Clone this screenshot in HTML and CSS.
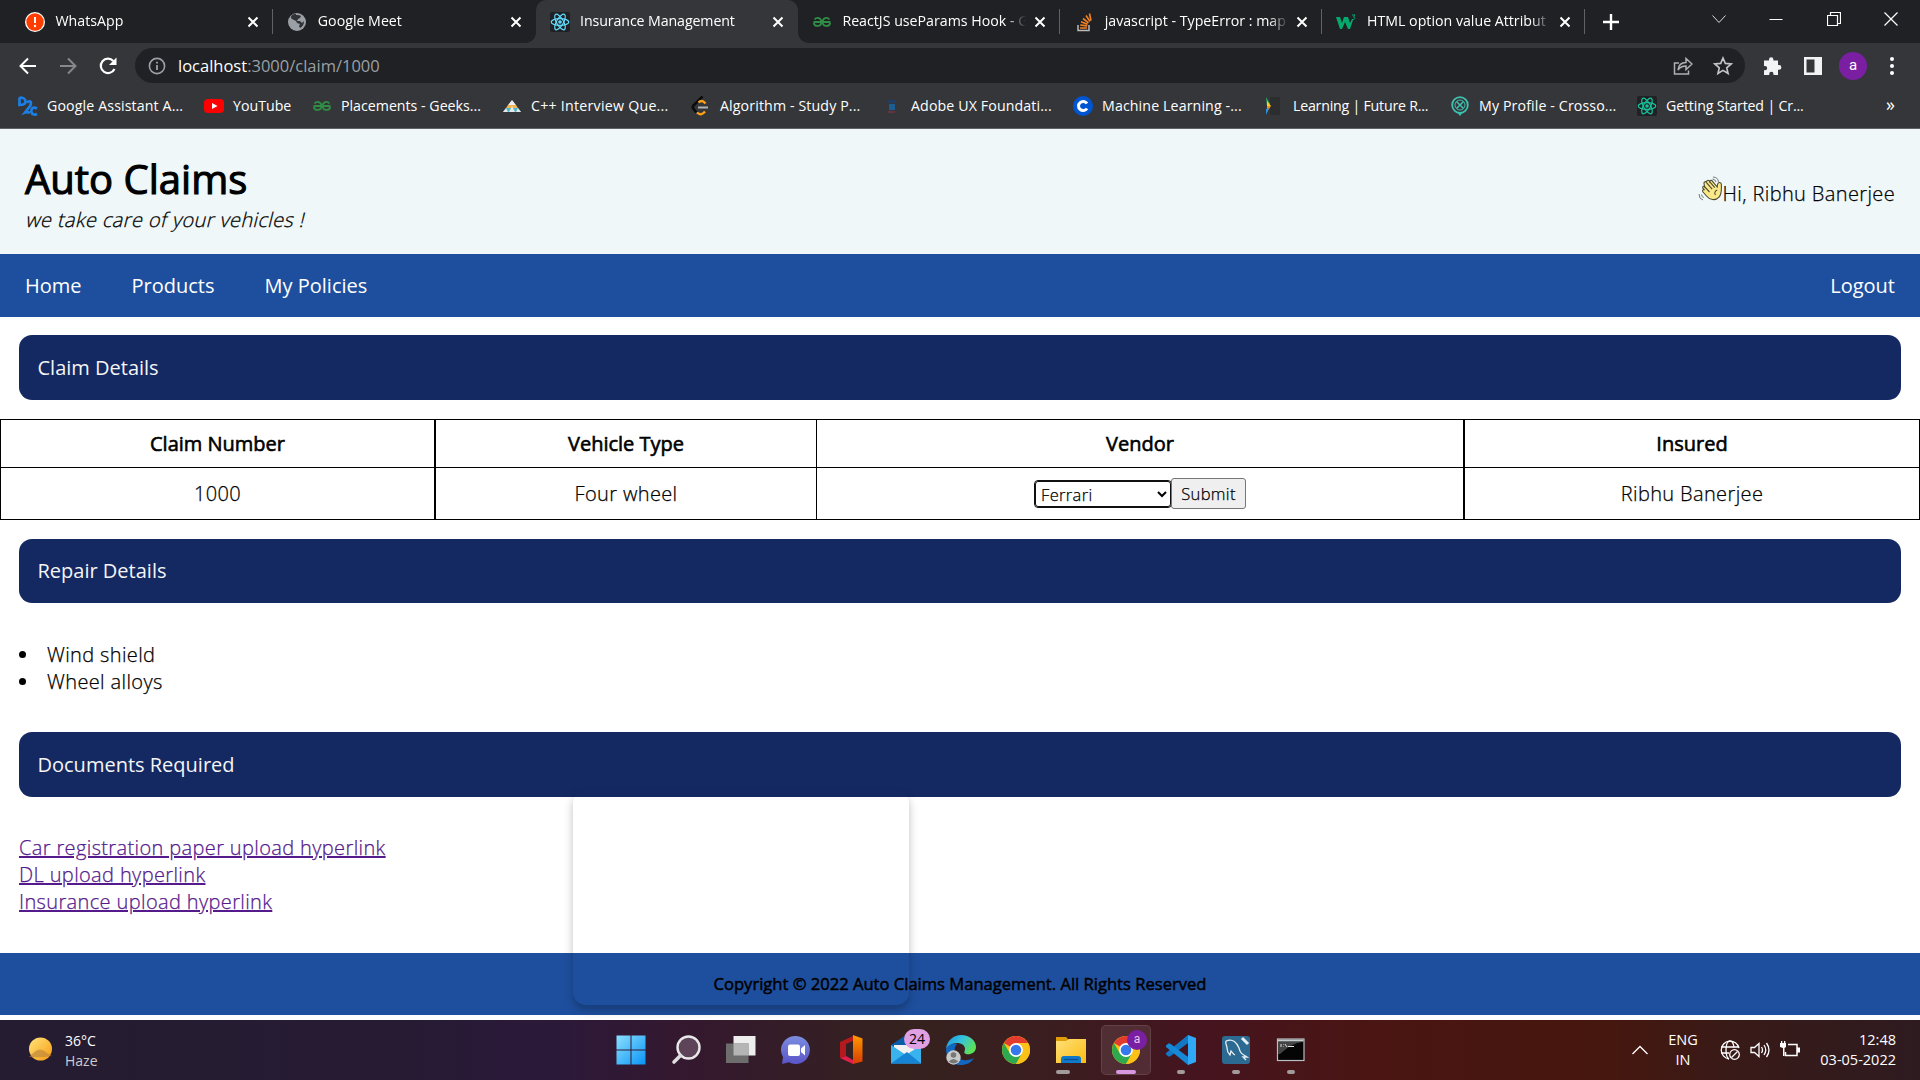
FILE: index.html
```html
<!DOCTYPE html>
<html lang="en">
<head>
<meta charset="utf-8">
<title>Insurance Management</title>
<link rel="stylesheet" href="styles.css">
</head>
<body>
<svg class="defs" width="0" height="0">
  <defs>
    <linearGradient id="win" x1="0" y1="0" x2="1" y2="1"><stop offset="0" stop-color="#8be0ff"/><stop offset="1" stop-color="#0a93f5"/></linearGradient>
    <linearGradient id="chat" x1="0" y1="0" x2="0" y2="1"><stop offset="0" stop-color="#7b8de0"/><stop offset="1" stop-color="#5a54c8"/></linearGradient>
    <linearGradient id="office" x1="0" y1="0" x2="0" y2="1"><stop offset="0" stop-color="#ff9a00"/><stop offset="1" stop-color="#d83b01"/></linearGradient>
    <linearGradient id="folder" x1="0" y1="0" x2="1" y2="1"><stop offset="0" stop-color="#ffe07a"/><stop offset="1" stop-color="#fbbc10"/></linearGradient>
    <linearGradient id="edge" x1="0" y1="0" x2="1" y2=".5"><stop offset="0" stop-color="#1b8fdc"/><stop offset=".5" stop-color="#35c1e0"/><stop offset="1" stop-color="#5be05a"/></linearGradient>
    <linearGradient id="sun" x1="0" y1="0" x2="1" y2="1"><stop offset="0" stop-color="#ffe57a"/><stop offset="1" stop-color="#f79a12"/></linearGradient>
    <symbol id="x" viewBox="0 0 12 12"><path d="M1.5 1.5l9 9M10.5 1.5l-9 9" stroke="#fff" stroke-width="2" fill="none"/></symbol>
    <symbol id="react" viewBox="0 0 20 20"><g fill="none" stroke="currentColor" stroke-width="1.2"><ellipse cx="10" cy="10" rx="8.8" ry="3.4"/><ellipse cx="10" cy="10" rx="8.8" ry="3.4" transform="rotate(60 10 10)"/><ellipse cx="10" cy="10" rx="8.8" ry="3.4" transform="rotate(120 10 10)"/></g><circle cx="10" cy="10" r="1.8" fill="currentColor"/></symbol>
    <symbol id="gfg" viewBox="0 0 20 20"><path d="M2.500 7.500C5 4.500 9.300 6 9.300 10H1.500M9.300 10c0 5-6.800 5.200-7.500.8M17.500 7.500C15 4.500 10.700 6 10.700 10h7.800M10.700 10c0 5 6.800 5.200 7.500.8" fill="none" stroke="#2f8d46" stroke-width="1.800"/></symbol>
    <symbol id="chrome" viewBox="0 0 28 28"><circle cx="14" cy="14" r="14" fill="#fbc116"/><path d="M14 14L1.900 7A14 14 0 0 1 26.100 7z" fill="#e33b2e"/><path d="M1.900 7A14 14 0 0 0 14 28l6-10.500L14 14 7.900 17.500z" fill="#2da94f"/><path d="M14 7h12.100A14 14 0 0 1 14 28l6-10.500z" fill="#fbc116"/><circle cx="14" cy="14" r="6.900" fill="#fff"/><circle cx="14" cy="14" r="5.300" fill="#3478ec"/></symbol>
  </defs>
</svg>

<header class="tabs">
  <div class="tab">
    <svg class="fav" viewBox="0 0 20 20"><circle cx="10" cy="10" r="10" fill="#fff"/><circle cx="10" cy="10" r="8.700" fill="#ff3d00"/><path d="M10 5v6" stroke="#fff" stroke-width="2"/><circle cx="10" cy="14" r="1.200" fill="#fff"/></svg>
    <span class="tab-title">WhatsApp</span><svg class="close"><use href="#x"/></svg>
  </div>
  <div class="tab flush">
    <svg class="fav" viewBox="0 0 20 20"><circle cx="10" cy="10" r="9" fill="#9aa0a6"/><path d="M9 3c2 0 4 0 5 1l-1 2-2 1-1 2h3l2 2 2-2c0 4-2 6-4 7l-1-2 1-2-3-1-1-2-4-2-1-1c0-3 2-4 5-4z" fill="#303235"/></svg>
    <span class="tab-title">Google Meet</span><svg class="close"><use href="#x"/></svg>
  </div>
  <div class="tab active flush">
    <svg class="fav dark cyan"><use href="#react"/></svg>
    <span class="tab-title">Insurance Management</span><svg class="close"><use href="#x"/></svg>
  </div>
  <div class="tab">
    <svg class="fav"><use href="#gfg"/></svg>
    <span class="tab-title">ReactJS useParams Hook - G</span><svg class="close"><use href="#x"/></svg>
  </div>
  <div class="tab">
    <svg class="fav" viewBox="0 0 20 20"><path d="M4 13v5.500h11V13" fill="none" stroke="#bcbbbb" stroke-width="1.500"/><path d="M6 16h7M6.200 13l7 .9M7 9.800l6.600 2.400M9 6.500l5.500 4.300M12 3.500l4 6M15.500 1.500l1.500 7" stroke="#f48024" stroke-width="1.600"/></svg>
    <span class="tab-title">javascript - TypeError : map</span><svg class="close"><use href="#x"/></svg>
  </div>
  <div class="tab">
    <svg class="fav" viewBox="0 0 20 20"><path d="M0 5h4l2 6 2-6h4l2 6 2-4 1 1-3 9h-2l-3-7-3 7H4z" fill="#04aa6d"/><path d="M16 3h3l-1.500 2c2 0 2 3-1.500 2.500" fill="none" stroke="#04aa6d"/></svg>
    <span class="tab-title">HTML option value Attribut</span><svg class="close"><use href="#x"/></svg>
  </div>
  <svg class="plus" viewBox="0 0 16 16"><path d="M8 0v16M0 8h16" stroke="#fff" stroke-width="2.400"/></svg>
  <div class="window-controls">
    <svg viewBox="0 0 14 14"><path d="M.5 3.500L7 10.500l6.500-7" fill="none" stroke="#ddd"/></svg>
    <svg viewBox="0 0 14 14"><path d="M.5 7.500h13" stroke="#fff"/></svg>
    <svg viewBox="0 0 14 14"><path d="M.5 3.500h10v10H.5zM3.500 3V.5h10v11H11" fill="none" stroke="#fff" stroke-width="1.200"/></svg>
    <svg viewBox="0 0 14 14"><path d="M.5.5l13 13M13.500.5l-13 13" stroke="#fff" stroke-width="1.200"/></svg>
  </div>
</header>

<div class="toolbar">
  <svg class="nav-icon" viewBox="0 0 20 20"><path d="M18 10H3M10 2.500L2.500 10l7.500 7.500" fill="none" stroke="#fff" stroke-width="2"/></svg>
  <svg class="nav-icon" viewBox="0 0 20 20"><path d="M2 10h15M10 2.500l7.500 7.500-7.500 7.500" fill="none" stroke="#86888a" stroke-width="2"/></svg>
  <svg class="nav-icon" viewBox="0 0 20 20"><path d="M16.500 13A7.200 7.200 0 1 1 15.300 5" fill="none" stroke="#fff" stroke-width="2.200"/><path d="M18.500 1.500V9H11z" fill="#fff"/></svg>
  <div class="omnibox">
    <svg class="info" viewBox="0 0 18 18"><circle cx="9" cy="9" r="7.600" fill="none" stroke="#9aa0a6" stroke-width="1.600"/><path d="M9 8v5M9 4.700v1.800" stroke="#9aa0a6" stroke-width="1.800"/></svg>
    <span class="url"><b>localhost</b>:3000/claim/1000</span>
    <svg class="share" viewBox="0 0 20 20"><path d="M6 7H1.500v11h14v-3.500M5 14c.5-5 3-7.500 8-7.500V2.500L19 8l-6 5.500V10c-4 0-6 1-8 4z" fill="none" stroke="#aeb0b3" stroke-width="1.500"/></svg>
    <svg class="star" viewBox="0 0 20 20"><path d="M10 2l2.300 5.400 5.900.5-4.500 3.900 1.400 5.700L10 14.400l-5.100 3.100 1.400-5.700L1.800 7.900l5.900-.5z" fill="none" stroke="#c4c6c9" stroke-width="1.600"/></svg>
  </div>
  <svg class="ext" viewBox="0 0 20 20"><path d="M7 3.500a2.200 2.200 0 0 1 4.400 0V4.500H16V9h1a2.400 2.400 0 0 1 0 4.800h-1V19h-4.500v-1a2 2 0 0 0-4.300 0v1H2v-4.700h1a2.200 2.200 0 0 0 0-4.400H2V4.500h5z" fill="#f1f3f4"/></svg>
  <svg class="panel" viewBox="0 0 18 18"><path d="M0 0h18v18H0zM2.500 2.500v13h8v-13z" fill="#f1f3f4" fill-rule="evenodd"/></svg>
  <span class="avatar">a</span>
  <svg class="dots" viewBox="0 0 4 18"><g fill="#fff"><circle cx="2" cy="2" r="2"/><circle cx="2" cy="9" r="2"/><circle cx="2" cy="16" r="2"/></g></svg>
</div>

<nav class="bookmarks">
  <span class="bm"><svg viewBox="0 0 20 20"><path d="M1.500 1.500v7.500q6.500 0 6-4-.5-3.500-6-3.500M9 6.500c3.500-3 5 0 3 3.500l-5 6.500q3-1 5 .5M19 12.500c-4-2-6 0-5.500 3.500.5 3 3.500 3 5.500 2" fill="none" stroke="#1b7fe3" stroke-width="2.700"/></svg>Google Assistant A...</span>
  <span class="bm"><svg viewBox="0 0 20 20"><rect y="3" width="20" height="14" rx="4" fill="#f00"/><path d="M8 7l5.500 3L8 13z" fill="#fff"/></svg>YouTube</span>
  <span class="bm"><svg><use href="#gfg"/></svg>Placements - Geeks...</span>
  <span class="bm"><svg viewBox="0 0 20 20"><path d="M10 4l4 5H6z" fill="#eceff1"/><path d="M6 9h8l2 3H4z" fill="#f4b350"/><path d="M4 12h12l3 4H1z" fill="#4db6c8"/><path d="M7 16l3-6 3 6zM1 16l3-4 2 4zM14 16l2-4 3 4z" fill="#e8e8e8"/></svg>C++ Interview Que...</span>
  <span class="bm"><svg viewBox="0 0 20 20"><path d="M11.500.5L2.500 9.500q-1.500 1.800 0 3.500l3 3.500" fill="none" stroke="#0b0b0b" stroke-width="2.600"/><path d="M7.500 6.500q3-3 6 0l1 1M6 16.500q4 4 8-1" fill="none" stroke="#ffa116" stroke-width="2.400"/><path d="M7 11.500h10" stroke="#b3b3b3" stroke-width="2"/></svg>Algorithm - Study P...</span>
  <span class="bm"><svg viewBox="0 0 20 20"><path d="M6 4h8v3H6z" fill="#223d63"/><path d="M7 8h6v6H7z" fill="#1d5d92"/><path d="M6 15h7v2H6z" fill="#633540"/></svg>Adobe UX Foundati...</span>
  <span class="bm"><svg viewBox="0 0 20 20"><circle cx="10" cy="10" r="10" fill="#0056d2"/><path d="M14 7.500a4.600 4.600 0 1 0 0 5" fill="none" stroke="#fff" stroke-width="3"/></svg>Machine Learning -...</span>
  <span class="bm"><svg viewBox="0 0 20 20"><path d="M6 1h10v18H6z" fill="#2c2d2f"/><path d="M2 1l4 7-3 2z" fill="#32b56a"/><path d="M3 5l4 5H3z" fill="#f7d21c"/><path d="M3 10h4l-4 6z" fill="#f58b1e"/><path d="M2 13l3-1-3 7z" fill="#2694df"/></svg>Learning | Future R...</span>
  <span class="bm"><svg viewBox="0 0 20 20"><circle cx="10" cy="9" r="7.800" fill="none" stroke="#3fc1b0" stroke-width="1.800"/><circle cx="10" cy="9" r="5" fill="none" stroke="#3fc1b0"/><path d="M6.500 5.500l7 7M13.500 5.500l-7 7" stroke="#3fc1b0" stroke-width="1.500"/><path d="M7 16h6l-3 4z" fill="#3fc1b0"/></svg>My Profile - Crosso...</span>
  <span class="bm"><svg class="dark green"><use href="#react"/></svg>Getting Started | Cr...</span>
  <span class="more">»</span>
</nav>

<section class="masthead">
  <div>
    <h1>Auto Claims</h1>
    <p class="tagline">we take care of your vehicles !</p>
  </div>
  <div class="greeting">
    <svg viewBox="0 0 26 26"><path d="M5 12.500c-1-2 .6-3 1.600-1.800L6 7.500C5.700 5.500 8 5 8.500 6.500 8.300 3.800 11 3.500 11.600 5.500c.6-1.800 2.700-1.200 3.100.2l4.500 5.300.3-2.500c.4-3 4-2.500 3.900.3-.1 5 .6 9-2.400 12.300-3.500 4-9.500 2.700-12-.6l-4-4.500c-1.200-1.800.6-3 1.500-2z" fill="#f9e988" stroke="#4e4a33" stroke-width="1.100"/><path d="M6.500 10.700l5 5.300M8.500 6.700l5.700 6.500M11.600 5.600l5.200 6M17.500 19c-1.500-2-.5-4 1.700-5" fill="none" stroke="#4e4a33" stroke-width="1.100"/><path d="M1 18q0 5 4 6M3.500 18.500q.2 2.500 2.300 3M15 1q5 .2 5.500 5M14.500 3q3 .4 3.400 3" fill="none" stroke="#777" stroke-width="1"/></svg>
    <span>Hi, Ribhu Banerjee</span>
  </div>
</section>
<nav class="site-nav">
  <a>Home</a><a>Products</a><a>My Policies</a><a class="logout">Logout</a>
</nav>

<main>
  <h2 class="bar">Claim Details</h2>
  <table class="claims">
    <tr><th>Claim Number</th><th>Vehicle Type</th><th>Vendor</th><th>Insured</th></tr>
    <tr>
      <td>1000</td><td>Four wheel</td>
      <td><div class="vendor"><select><option>Ferrari</option></select><button>Submit</button></div></td>
      <td>Ribhu Banerjee</td>
    </tr>
  </table>
  <h2 class="bar short">Repair Details</h2>
  <ul class="repairs"><li>Wind shield</li><li>Wheel alloys</li></ul>
  <div class="documents">
    <h2 class="bar">Documents Required</h2>
    <div class="card"></div>
  </div>
  <div class="links">
    <a>Car registration paper upload hyperlink</a>
    <a>DL upload hyperlink</a>
    <a>Insurance upload hyperlink</a>
  </div>
</main>
<footer class="copyright">Copyright © 2022 Auto Claims Management. All Rights Reserved</footer>

<div class="taskbar">
  <div class="weather">
    <svg viewBox="0 0 26 26"><circle cx="12.500" cy="12" r="11.500" fill="url(#sun)"/><path d="M5 16q7-7 14 0l5 3q-12 2-23 1z" fill="#b5803c" opacity=".6"/></svg>
    <div><span>36°C</span><span class="dim">Haze</span></div>
  </div>
  <div class="apps">
    <span class="app"><svg viewBox="0 0 30 30"><path d="M.5.5h14v14H.5zM15.500.5h14v14h-14zM.5 15.500h14v14H.5zM15.500 15.500h14v14h-14z" fill="url(#win)"/></svg></span>
    <span class="app"><svg viewBox="0 0 30 30"><circle cx="17.500" cy="12.500" r="11" fill="#5d4458" stroke="#e9e9ea" stroke-width="2.400"/><path d="M9.500 20.500L3 27" stroke="#dedede" stroke-width="3.600" stroke-linecap="round"/></svg></span>
    <span class="app"><svg viewBox="0 0 30 30"><path d="M7.500 1h22v19.500h-22z" fill="#ededed"/><path d="M0 8.500h22.500V28H0z" fill="#6d6d6d"/><path d="M7.500 8.500h15v12h-15z" fill="#b5b5b5"/></svg></span>
    <span class="app"><svg viewBox="0 0 30 30"><path d="M15 1a14 14 0 1 1-7 26.200L1 29l1-7A14 14 0 0 1 15 1z" fill="url(#chat)"/><rect x="7" y="9.500" width="12" height="11.500" rx="2" fill="#fff"/><path d="M20 13.500l4-3.500v10.500L20 17z" fill="#fff"/></svg></span>
    <span class="app"><svg viewBox="0 0 30 30"><path d="M4 7l13-6v5l-7 3v12L4 23z" fill="#b3191d"/><path d="M17 0l9.500 3.500v23L17 29z" fill="url(#office)"/><path d="M4 23l6-2 7 4v4z" fill="#e0204a"/></svg></span>
    <span class="app"><svg viewBox="0 0 30 30"><path d="M0 10L15 0l15 10v8H0z" fill="#0a5ca8"/><path d="M3 10h24v9L15 22 3 17z" fill="#f1f1f1"/><path d="M0 10l15 10L30 10v18.500H0z" fill="#38b3ee"/><path d="M0 28.500L16 17l14 11.500z" fill="#1584d4"/></svg><b class="count">24</b></span>
    <span class="app"><svg viewBox="0 0 30 30"><path d="M0 14C1 5 8 0 15 0c9 0 15 6 15 12 0 6-6 8-10 7-3-1-1-3-1-5 0-4-4-6-8-6-5 0-9 3-11 6z" fill="url(#edge)"/><path d="M0 14c2-4 7-6 11-5-4 4-3 12 3 15 5 2.500 10 1 14-1-3 5-8 7-13 7C6 30 0 23 0 14z" fill="#1268c0"/><circle cx="7.500" cy="22.500" r="7.200" fill="#c9c9c7"/><circle cx="7.500" cy="20" r="2.800" fill="#777"/><path d="M2.800 26.500q4.700-5 9.400 0-4.700 4-9.400 0z" fill="#777"/></svg></span>
    <span class="app"><svg class="sm"><use href="#chrome"/></svg></span>
    <span class="app"><svg viewBox="0 0 30 30"><path d="M0 2h10l3 3h-1v5H0z" fill="#e09c08"/><path d="M0 6h10l3-2h17v24H0z" fill="url(#folder)"/><path d="M5 28v-4q0-3 3-3h14q3 0 3 3v4z" fill="#0f78c8"/><path d="M8 24.500h14" stroke="#0a4f92" stroke-width="1.300"/></svg><i class="ind wide"></i></span>
    <span class="app current"><svg class="sm"><use href="#chrome"/></svg><b class="who">a</b><i class="ind long"></i></span>
    <span class="app"><svg viewBox="0 0 30 30"><path d="M22 0l8 3v24l-8 3z" fill="#2fa8f5"/><path d="M22 0v8L4 21.500H2.500L0 19.500v-1.500z" fill="#1277c4"/><path d="M22 30v-8L4 8.500H2.500L0 10.500v1.500z" fill="#1688d8"/></svg><i class="ind"></i></span>
    <span class="app"><svg viewBox="0 0 30 30"><rect x="1" y="1" width="28" height="28" rx="3" fill="#2d6a92"/><path d="M5 6c7-3 11 2 13 7 1 5 3 6 8 9l-4 0 3 3M5 6c-1 3 1 4 1 7s1 5 3 7l1-4c1 1 2 3 4 4" fill="none" stroke="#e6eef3" stroke-width="1.300"/><path d="M21 3l6 6" stroke="#e6eef3" stroke-width="3"/></svg><i class="ind"></i></span>
    <span class="app"><svg viewBox="0 0 30 30"><rect x="1.500" y="4" width="26.500" height="21.500" fill="#050505" stroke="#b9bfc2" stroke-width="1.200"/><path d="M2 4.500h25.500v2H2z" fill="#c7cccf"/><path d="M2 7h24q-10 1-22 12H2z" fill="#444"/><path d="M5 9v3M7.500 9v.5M7.500 11.500v.5M9 9l2 3M12 11.500h6" stroke="#ddd"/></svg><i class="ind"></i></span>
  </div>
  <div class="tray">
    <svg class="up" viewBox="0 0 16 10"><path d="M.5 9L8 1.500 15.500 9" fill="none" stroke="#fff" stroke-width="1.300"/></svg>
    <div class="lang"><span>ENG</span><span>IN</span></div>
    <svg class="net" viewBox="0 0 20 20"><g fill="none" stroke="#fff" stroke-width="1.300"><path d="M19 8A9 9 0 1 0 9 19M1 7h17.500M1 13h8"/><path d="M14 7.500C13.500 3 12 1 10 1 7.500 1 6 5 6 10s1.200 8 3 9"/><circle cx="14.500" cy="14.500" r="4.800"/><path d="M11.500 17.500l6-6"/></g></svg>
    <svg class="vol" viewBox="0 0 20 20"><path d="M1 7.500h3.500L9 3.500v13l-4.500-4H1zM11.500 7q2 3 0 6M14 5q3.500 5 0 10M16.500 3q5 7 0 14" fill="none" stroke="#fff" stroke-width="1.300"/></svg>
    <svg class="bat" viewBox="0 0 20 20"><path d="M0 3h6v4L4.500 8v8H3V8L0 7zM1 1h1.300v3H1zM4 1h1.300v3H4z" fill="#fff"/><path d="M8 4.500h9v11H5.500V12" fill="none" stroke="#fff" stroke-width="1.500"/><path d="M17 7.500h3v5h-3z" fill="#fff"/></svg>
    <div class="clock"><span>12:48</span><span>03-05-2022</span></div>
  </div>
</div>
</body>
</html>
```
FILE: styles.css
```css
* { box-sizing: border-box; }
body {
  margin: 0;
  width: 1920px;
  height: 1080px;
  overflow: hidden;
  display: flex;
  flex-direction: column;
  background: #fff;
  color: #000;
  font: 20px "Open Sans", sans-serif;
}
svg { display: block; flex: none; }
.defs { position: absolute; }
h1, h2, p, ul { margin: 0; }

/* Tab strip */
.tabs {
  flex: none;
  height: 43px;
  padding-left: 11px;
  display: flex;
  align-items: center;
  background: #202124;
  color: #fff;
  font-size: 14.2px;
}
.tab {
  flex: none;
  width: 262.3px;
  height: 43px;
  padding: 0 14px 0 14px;
  display: flex;
  align-items: center;
  position: relative;
}
.tab:not(.active)::after {
  content: "";
  position: absolute;
  right: 0;
  top: 9px;
  width: 1px;
  height: 25px;
  background: #5f6368;
}
.tab.flush::after { display: none; }
.tab.active { background: #35363a; border-radius: 10px 10px 0 0; letter-spacing: -.1px; }
.tab.active::before {
  content: "";
  position: absolute;
  bottom: 0;
  left: -10px;
  right: -10px;
  height: 10px;
  background:
    radial-gradient(circle at 0 0, #202124 9.500px, #35363a 10px) left / 10px 10px no-repeat,
    radial-gradient(circle at 100% 0, #202124 9.500px, #35363a 10px) right / 10px 10px no-repeat;
}
.fav { width: 20px; height: 20px; margin-right: 7.500px; }
.dark { background: #202124; border-radius: 2px; }
.cyan { color: #61dafb; }
.green { color: #17c29b; }
.tab-title {
  flex: 1;
  min-width: 0;
  height: 24px;
  padding-left: 3px;
  line-height: 22px;
  white-space: nowrap;
  margin-right: 8px;
  -webkit-mask-image: linear-gradient(90deg, #000 167px, transparent 187px);
}
.close { width: 12px; height: 12px; }
.plus { width: 16px; height: 16px; margin-left: 18px; }
.window-controls {
  margin: 0 22px 5px auto;
  display: flex;
  gap: 43.500px;
}
.window-controls svg { width: 14px; height: 14px; }

/* Toolbar */
.toolbar {
  flex: none;
  height: 45px;
  padding: 0 25px 0 18px;
  display: flex;
  align-items: center;
  background: #35363a;
}
.nav-icon { width: 20px; height: 20px; margin-right: 20px; }
.omnibox {
  width: 1610px;
  height: 35px;
  margin-left: -3px;
  padding: 0 12px 0 13px;
  border-radius: 18px;
  display: flex;
  align-items: center;
  background: #202124;
}
.info { width: 18px; height: 18px; margin-right: 12px; }
.url { flex: 1; color: #9aa0a6; font-size: 16.500px; line-height: 22px; }
.url b { color: #fff; font-weight: 400; }
.share, .star { width: 20px; height: 20px; margin-left: 20px; }
.ext { width: 20px; height: 20px; margin-left: 17px; }
.panel { width: 18px; height: 18px; margin-left: 22px; }
.avatar {
  width: 28px;
  height: 28px;
  margin-left: 17px;
  border-radius: 50%;
  background: #7b1fa2;
  color: #fff;
  font: 15px/27px Roboto, sans-serif;
  text-align: center;
}
.dots { width: 4px; height: 18px; margin-left: 23px; }

/* Bookmarks */
.bookmarks {
  flex: none;
  height: 41px;
  padding-left: 18px;
  padding-bottom: 5px;
  display: grid;
  grid-template-columns: 186px 108px 190px 189px 191px 191px 191px 186px 187px 249px auto;
  align-items: center;
  background: #35363a;
  border-bottom: 1px solid #5f6368;
  color: #fff;
  font-size: 14.200px;
  white-space: nowrap;
}
.bm { display: flex; align-items: center; gap: 9px; }
.bm svg { width: 20px; height: 20px; }
.bm:nth-child(1), .bm:nth-child(5), .bm:nth-child(6), .bm:nth-child(7), .bm:nth-child(9) { letter-spacing: .12px; }
.bm:nth-child(4) { letter-spacing: .25px; }
.bm:nth-child(8) { letter-spacing: -.22px; }
.bm:nth-child(10) { letter-spacing: -.16px; }
.more { font-size: 18px; line-height: 20px; padding-bottom: 3px; }

/* Site header */
.masthead {
  flex: none;
  height: 125px;
  padding: 2px 25px 0;
  display: flex;
  justify-content: space-between;
  align-items: center;
  background: #eff7f9;
}
h1 { font-size: 40px; font-weight: 400; line-height: 54px; -webkit-text-stroke: 1.100px #000; }
.tagline { transform: skewX(-14deg); transform-origin: 0 21px; width: max-content; }
.tagline, .greeting, .claims td, .repairs, .links {
  font-weight: 300;
  letter-spacing: .37px;
  -webkit-text-stroke: .25px currentColor;
}
.greeting { display: flex; align-items: center; padding-top: 2px; }
.greeting svg { width: 26px; height: 26px; margin: -10px -1px 0 0; }
.site-nav {
  flex: none;
  height: 63px;
  padding: 0 25px;
  display: flex;
  align-items: center;
  gap: 50px;
  background: #1e4f9e;
  color: #fff;
}
.logout { margin-left: auto; }

/* Claim page */
main { flex: none; height: 636px; padding-top: 18px; }
.bar {
  height: 65px;
  margin: 0 19px;
  padding-left: 18.500px;
  border-radius: 13px;
  background: #142862;
  color: #f5f5f5;
  font-size: 20px;
  font-weight: 400;
  line-height: 65px;
}
.bar.short { height: 64px; line-height: 63px; }
.claims {
  width: 1920px;
  margin: 19px 0;
  table-layout: fixed;
  border-spacing: 0;
  border-left: 1px solid #000;
  border-top: 1px solid #000;
  text-align: center;
}
.claims th, .claims td {
  padding: 0;
  border-right: 1px solid #000;
  border-bottom: 1px solid #000;
}
.claims th { height: 48px; font-weight: 400; -webkit-text-stroke: .6px #000; }
.claims td { height: 52px; }
.claims th:nth-child(1) { width: 435px; }
.claims th:nth-child(2) { width: 381px; }
.claims th:nth-child(3) { width: 648px; }
.claims tr > :nth-child(odd) { border-right-width: 2px; }
.claims tr > :last-child { border-right-width: 1px; }
.vendor { display: flex; justify-content: center; align-items: center; padding-left: 1px; }
.vendor select {
  width: 136px;
  height: 26px;
  padding: 0 0 1px 1px;
  border: 1px solid #101010;
  border-radius: 3px;
  outline: 1px solid #101010;
  background: #fff;
  color: #000;
  font: 300 16.500px "Open Sans", sans-serif;
  letter-spacing: .35px;
}
.vendor button {
  width: 75px;
  height: 31px;
  padding: 0;
  border: 1px solid #767676;
  border-radius: 3px;
  background: #efefef;
  color: #000;
  font: 300 16.600px "Open Sans", sans-serif;
  letter-spacing: .3px;
}
.vendor select, .vendor button { -webkit-text-stroke: .25px #000; }
.repairs { height: 129px; padding: 38px 0 0 19px; list-style-position: inside; line-height: 27px; }
.documents { position: relative; }
.card {
  position: absolute;
  z-index: 1;
  left: 573px;
  top: 58px;
  width: 336px;
  height: 215px;
  border-radius: 13px;
  box-shadow: 0 5px 10px rgba(0, 0, 0, .25);
}
.links {
  padding: 37px 19px 0;
  display: flex;
  flex-direction: column;
  align-items: flex-start;
  line-height: 27px;
  color: #551a8b;
}
.links a { text-decoration: underline; }
.copyright {
  flex: none;
  height: 62px;
  margin-bottom: 5px;
  background: #1e4f9e;
  font-size: 16.570px;
  line-height: 61px;
  text-align: center;
  -webkit-text-stroke: .5px #000;
}

/* Taskbar */
.taskbar {
  flex: none;
  height: 60px;
  display: flex;
  align-items: center;
  background: linear-gradient(90deg, #251c31 0, #261b33 400px, #2b193a 550px, #34182f 680px, #35221f 900px, #3b1d20 1060px, #45141f 1200px, #4a1512 1380px, #46170e 1600px, #381a18 1740px, #2e1b20 1920px);
  color: #fff;
  font-size: 14.500px;
}
.weather, .tray { flex: 1; display: flex; align-items: center; }
.weather { padding-left: 28px; gap: 11px; }
.weather svg { width: 26px; height: 26px; }
.weather span, .lang span, .clock span { display: block; line-height: 20px; }
.weather > div { font-size: 14px; padding-top: 1px; }
.dim { color: #ccc; }
.apps { display: flex; gap: 5px; margin: 0 0 0 -2px; }
.app {
  position: relative;
  width: 50px;
  height: 50px;
  border-radius: 5px;
  display: flex;
  justify-content: center;
  align-items: center;
}
.app svg { width: 30px; height: 30px; }
.app svg.sm { width: 28px; height: 28px; }
.current { background: rgba(255, 255, 255, .09); border: 1px solid rgba(255, 255, 255, .1); }
.ind {
  position: absolute;
  left: 21px;
  bottom: 1px;
  width: 8px;
  height: 4px;
  border-radius: 2px;
  background: #a39a9b;
}
.ind.wide { left: 10px; width: 14px; }
.ind.long { left: 14px; bottom: 0; width: 20px; background: #d798e0; }
.count {
  position: absolute;
  left: 23px;
  top: 4px;
  width: 26px;
  height: 20px;
  border-radius: 10px;
  background: #dfa0e4;
  color: #000;
  font: 14px/20px "Open Sans", sans-serif;
  text-align: center;
}
.who {
  position: absolute;
  left: 25px;
  top: 4px;
  width: 20px;
  height: 20px;
  border-radius: 50%;
  background: #7b1fa2;
  color: #e5c6f0;
  font: 12px/19px Roboto, sans-serif;
  text-align: center;
}
.tray { justify-content: flex-end; padding-right: 24px; }
.up { width: 16px; height: 10px; margin-right: 20px; }
.lang { width: 30px; margin-right: 22px; text-align: center; }
.net, .vol, .bat { width: 20px; height: 20px; margin-right: 10px; }
.clock { width: 79px; margin-left: 7px; text-align: right; }
```
